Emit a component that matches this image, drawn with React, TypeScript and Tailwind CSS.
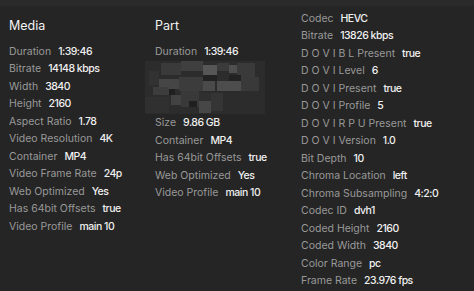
import React from 'react';

type Row = [string, string];

const media: Row[] = [
  ['Duration', '1:39:46'],
  ['Bitrate', '14148 kbps'],
  ['Width', '3840'],
  ['Height', '2160'],
  ['Aspect Ratio', '1.78'],
  ['Video Resolution', '4K'],
  ['Container', 'MP4'],
  ['Video Frame Rate', '24p'],
  ['Web Optimized', 'Yes'],
  ['Has 64bit Offsets', 'true'],
  ['Video Profile', 'main 10'],
];

const partTail: Row[] = [
  ['Size', '9.86 GB'],
  ['Container', 'MP4'],
  ['Has 64bit Offsets', 'true'],
  ['Web Optimized', 'Yes'],
  ['Video Profile', 'main 10'],
];

const stream: Row[] = [
  ['Codec', 'HEVC'],
  ['Bitrate', '13826 kbps'],
  ['D O V I B L Present', 'true'],
  ['D O V I Level', '6'],
  ['D O V I Present', 'true'],
  ['D O V I Profile', '5'],
  ['D O V I R P U Present', 'true'],
  ['D O V I Version', '1.0'],
  ['Bit Depth', '10'],
  ['Chroma Location', 'left'],
  ['Chroma Subsampling', '4:2:0'],
  ['Codec ID', 'dvh1'],
  ['Coded Height', '2160'],
  ['Coded Width', '3840'],
  ['Color Range', 'pc'],
  ['Frame Rate', '23.976 fps'],
];

function Item({ row }: { row: Row }) {
  return (
    <div className="h-[17.5px] flex items-center gap-[7px] whitespace-nowrap">
      <span className="text-[#999999]">{row[0]}</span>
      <span className="text-[#f0f0f0] font-medium tracking-[-0.5px]">{row[1]}</span>
    </div>
  );
}

// pixelated placeholder where the file name is hidden
const cells: [number, number, number, number, string][] = [
  [0, 0, 120, 53, '#2c2c2c'],
  [16, 2, 20, 12, '#3a3a3a'],
  [36, 0, 22, 10, '#3f3f3f'],
  [58, 4, 14, 10, '#565656'],
  [72, 2, 12, 8, '#3b3b3b'],
  [84, 4, 8, 8, '#4f4f4f'],
  [92, 2, 18, 14, '#3a3a3a'],
  [58, 14, 14, 6, '#222222'],
  [84, 14, 12, 6, '#222222'],
  [4, 10, 10, 14, '#323232'],
  [14, 18, 20, 10, '#464646'],
  [34, 16, 24, 14, '#3c3c3c'],
  [58, 20, 12, 10, '#4a4a4a'],
  [72, 20, 24, 10, '#4d4d4d'],
  [96, 16, 18, 14, '#393939'],
  [8, 26, 16, 8, '#3d3d3d'],
  [24, 28, 6, 6, '#1f1f1f'],
  [26, 34, 10, 10, '#424242'],
  [36, 30, 18, 16, '#393939'],
  [54, 32, 12, 8, '#2f2f2f'],
  [54, 40, 12, 12, '#474747'],
  [44, 40, 8, 6, '#1f1f1f'],
  [0, 36, 24, 16, '#303030'],
  [66, 32, 12, 18, '#353535'],
];

function Mosaic() {
  return (
    <svg width="120" height="53" viewBox="0 0 120 53" className="block -ml-[10px] my-[0.5px]">
      {cells.map(([x, y, w, h, c], i) => (
        <rect key={i} x={x} y={y} width={w} height={h} fill={c} />
      ))}
    </svg>
  );
}

export default function App() {
  return (
    <div
      className="w-[474px] h-[291px] overflow-hidden bg-[#252525] flex text-[10.5px] relative"
      style={{ fontFamily: 'Inter, "Noto Sans", sans-serif' }}
    >
      <div className="absolute inset-x-0 top-0 h-[6px] bg-[#2a2a2a]" />

      {/* Media */}
      <div className="w-[146px] pl-[9px] pt-[17px] shrink-0">
        <div className="h-[18px] leading-[18px] text-[12.5px] text-[#f2f2f2]">Media</div>
        <div className="mt-[8px]">
          {media.map((r, i) => (
            <Item key={i} row={r} />
          ))}
        </div>
      </div>

      {/* Part */}
      <div className="w-[146px] pl-[9px] pt-[17px] shrink-0">
        <div className="h-[18px] leading-[18px] text-[12.5px] text-[#f2f2f2]">Part</div>
        <div className="mt-[8px]">
          <Item row={['Duration', '1:39:46']} />
          <Mosaic />
          {partTail.map((r, i) => (
            <Item key={i} row={r} />
          ))}
        </div>
      </div>

      {/* Stream */}
      <div className="flex-1 pl-[9px] pt-[10px]">
        {stream.map((r, i) => (
          <Item key={i} row={r} />
        ))}
      </div>
    </div>
  );
}
